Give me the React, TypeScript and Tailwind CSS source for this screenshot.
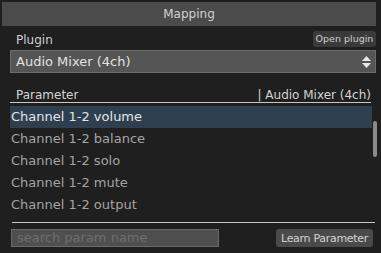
import React from "react";

const rows = [
  "Channel 1-2 volume",
  "Channel 1-2 balance",
  "Channel 1-2 solo",
  "Channel 1-2 mute",
  "Channel 1-2 output",
];

export default function App() {
  return (
    <div
      className="w-[381px] h-[253px] bg-[#1f1f1f] overflow-hidden flex flex-col pt-[2px] px-[2px] pb-[3px] text-[#c8c8c8]"
      style={{ fontFamily: '"DejaVu Sans", Verdana, sans-serif' }}
    >
      <div className="h-[24px] mr-[3px] bg-[#4b4b4b] flex items-center justify-center text-[12px] text-[#d2d2d2]">
        Mapping
      </div>
      <div className="flex items-center justify-between h-[16px] pl-[14px] pr-[3px] mt-[5px]">
        <span className="text-[12px] text-[#d0d0d0] mt-[2px]">Plugin</span>
        <button className="w-[63px] h-[16px] rounded-[3px] bg-[#3a3a3a] text-[9.5px] text-[#cfcfcf] leading-none whitespace-nowrap text-center">
          Open plugin
        </button>
      </div>
      <div className="ml-[8px] mr-[3px] mt-[3px] h-[23px] bg-[#555555] border border-[#6c6c6c] flex items-center justify-between pl-[5px] pr-[4px]">
        <span className="text-[13px] text-[#e2e2e2]">Audio Mixer (4ch)</span>
        <svg width="9" height="12" viewBox="0 0 9 12">
          <path d="M4.5 0 L9 5 L0 5 Z" fill="#e8e8e8" />
          <path d="M0 7 L9 7 L4.5 12 Z" fill="#e8e8e8" />
        </svg>
      </div>
      <div className="ml-[8px] mr-[8px] mt-[10px] h-[20px] flex items-end justify-between pl-[6px] pb-[1px] border-b border-[#c8c8c8] text-[12px] text-[#d4d4d4] leading-none">
        <span>Parameter</span>
        <span>| Audio Mixer (4ch)</span>
      </div>
      <div className="relative ml-[8px] mr-[2px] mt-[3px] flex flex-col">
        {rows.map((r, i) => (
          <div
            key={r}
            className={
              i === 0
                ? "h-[22px] mr-[5px] flex items-center pl-[1px] bg-[#2e4050] text-[13px] text-[#e4e4e4]"
                : "h-[22px] mr-[5px] flex items-center pl-[1px] text-[13px] text-[#a4a4a4]"
            }
          >
            {r}
          </div>
        ))}
        <div className="absolute right-0 top-[15px] w-[4px] h-[36px] rounded-[2px] bg-[#8a8a8a]" />
      </div>
      <div className="ml-[10px] mr-[4px] mt-[6px] h-px bg-[#c8c8c8]" />
      <div className="flex items-center justify-between ml-[9px] mr-[6px] mt-[6px]">
        <div className="w-[208px] h-[18px] bg-[#4f4f4f] border border-[#6a6a6a] flex items-center pl-[5px] text-[13px] text-[#6e6e6e] whitespace-nowrap">
          search param name
        </div>
        <button className="w-[97px] h-[18px] rounded-[3px] bg-[#4a4a4a] text-[11px] tracking-[-0.3px] text-[#d4d4d4] leading-none whitespace-nowrap">
          Learn Parameter
        </button>
      </div>
    </div>
  );
}
